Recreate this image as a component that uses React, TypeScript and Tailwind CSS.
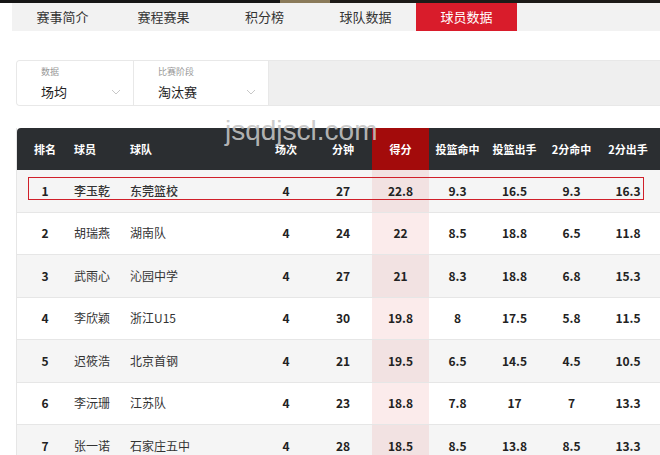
import * as React from "react";

const tabs = ["赛事简介", "赛程赛果", "积分榜", "球队数据", "球员数据"];

const headers = ["排名", "球员", "球队", "场次", "分钟", "得分", "投篮命中", "投篮出手", "2分命中", "2分出手"];

const rows = [
  ["1", "李玉乾", "东莞篮校", "4", "27", "22.8", "9.3", "16.5", "9.3", "16.3"],
  ["2", "胡瑞燕", "湖南队", "4", "24", "22", "8.5", "18.8", "6.5", "11.8"],
  ["3", "武雨心", "沁园中学", "4", "27", "21", "8.3", "18.8", "6.8", "15.3"],
  ["4", "李欣颖", "浙江U15", "4", "30", "19.8", "8", "17.5", "5.8", "11.5"],
  ["5", "迟筱浩", "北京首钢", "4", "21", "19.5", "6.5", "14.5", "4.5", "10.5"],
  ["6", "李沅珊", "江苏队", "4", "23", "18.8", "7.8", "17", "7", "13.3"],
  ["7", "张一诺", "石家庄五中", "4", "28", "18.5", "8.5", "13.8", "8.5", "13.3"],
];

const grid = "grid grid-cols-[56px_56px_129px_56px_58px_57px_57px_57px_57px_56px_1fr]";

function Chevron() {
  return (
    <svg width="10" height="6" viewBox="0 0 10 6" className="text-[#c8c8c8]">
      <path d="M1 1l4 4 4-4" fill="none" stroke="currentColor" strokeWidth="1" />
    </svg>
  );
}

function Filter({ label, value, width }: { label: string; value: string; width: string }) {
  return (
    <div className={`${width} flex items-end justify-between border-r border-[#e8e8e8] bg-white pb-[5px] pl-6 pr-3`}>
      <div className="flex flex-col">
        <span className="text-[9px] leading-[12px] text-[#999]">{label}</span>
        <span className="mt-[6px] text-[13px] leading-[16px] text-[#222]">{value}</span>
      </div>
      <div className="mb-[5px]">
        <Chevron />
      </div>
    </div>
  );
}

export default function App() {
  return (
    <main
      className="relative h-[455px] w-[660px] overflow-hidden bg-white"
      style={{ fontFamily: '"Noto Sans CJK SC", "Noto Sans", sans-serif' }}
    >
      {/* photo strip */}
      <div className="flex h-[3px]">
        <div className="w-[280px] bg-[#161616]" />
        <div className="w-[50px] bg-[#8a7a5a]" />
        <div className="flex-1 bg-[#1d1b18]" />
      </div>

      {/* Tabs */}
      <nav className="ml-[12px] flex h-[28px] bg-[#f2f2f2]">
        {tabs.map((t, i) => (
          <div
            key={t}
            className={`flex w-[101px] items-center justify-center text-[13px] ${
              i === 4 ? "bg-[#d91c2b] text-white" : "text-[#333]"
            }`}
          >
            {t}
          </div>
        ))}
      </nav>

      {/* Filters */}
      <div className="ml-[16px] mt-[29px] flex h-[46px] overflow-hidden rounded-l-[4px] border border-r-0 border-[#e8e8e8] bg-[#efefef]">
        <Filter label="数据" value="场均" width="w-[117px]" />
        <Filter label="比赛阶段" value="淘汰赛" width="w-[135px]" />
      </div>

      {/* Table */}
      <div className="ml-[16px] mt-[22px] border-l border-[#e6e6e6]">
        <div className={`${grid} h-[42px] rounded-tl-[4px] bg-[#2b2e31] text-[11px] font-bold text-white`}>
          {headers.map((h, i) => (
            <div
              key={h}
              className={`flex items-center ${i === 1 || i === 2 ? "justify-start pl-px" : "justify-center"} ${
                i === 5 ? "bg-[#a30b0b]" : ""
              }`}
            >
              {h}
            </div>
          ))}
          <div />
        </div>
        {rows.map((r, ri) => (
          <div
            key={r[0]}
            className={`${grid} h-[42.5px] border-b border-[#e6e6e6] text-[12px] text-[#222] ${
              ri % 2 === 0 ? "bg-[#f5f5f5]" : "bg-white"
            }`}
          >
            {r.map((c, i) => (
              <div
                key={i}
                className={`flex items-center ${
                  i === 1 || i === 2
                    ? `justify-start pl-px text-[#333] ${ri === 0 ? "font-medium" : "font-normal"}`
                    : "justify-center font-bold"
                } ${i === 5 ? "bg-[#c80000]/[0.08]" : ""}`}
              >
                {c}
              </div>
            ))}
            <div />
          </div>
        ))}
      </div>

      {/* annotation box */}
      <div className="absolute left-[28px] top-[177px] h-[23px] w-[616px] border-[1.5px] border-[#d0202a]" />

      {/* watermark */}
      <div
        className="absolute left-[225px] top-[117px] text-[28px] leading-none text-[#c4c4c4]/90"
        style={{ fontFamily: '"Liberation Sans", Arial, sans-serif' }}
      >
        jsqdjscl.com
      </div>
    </main>
  );
}
